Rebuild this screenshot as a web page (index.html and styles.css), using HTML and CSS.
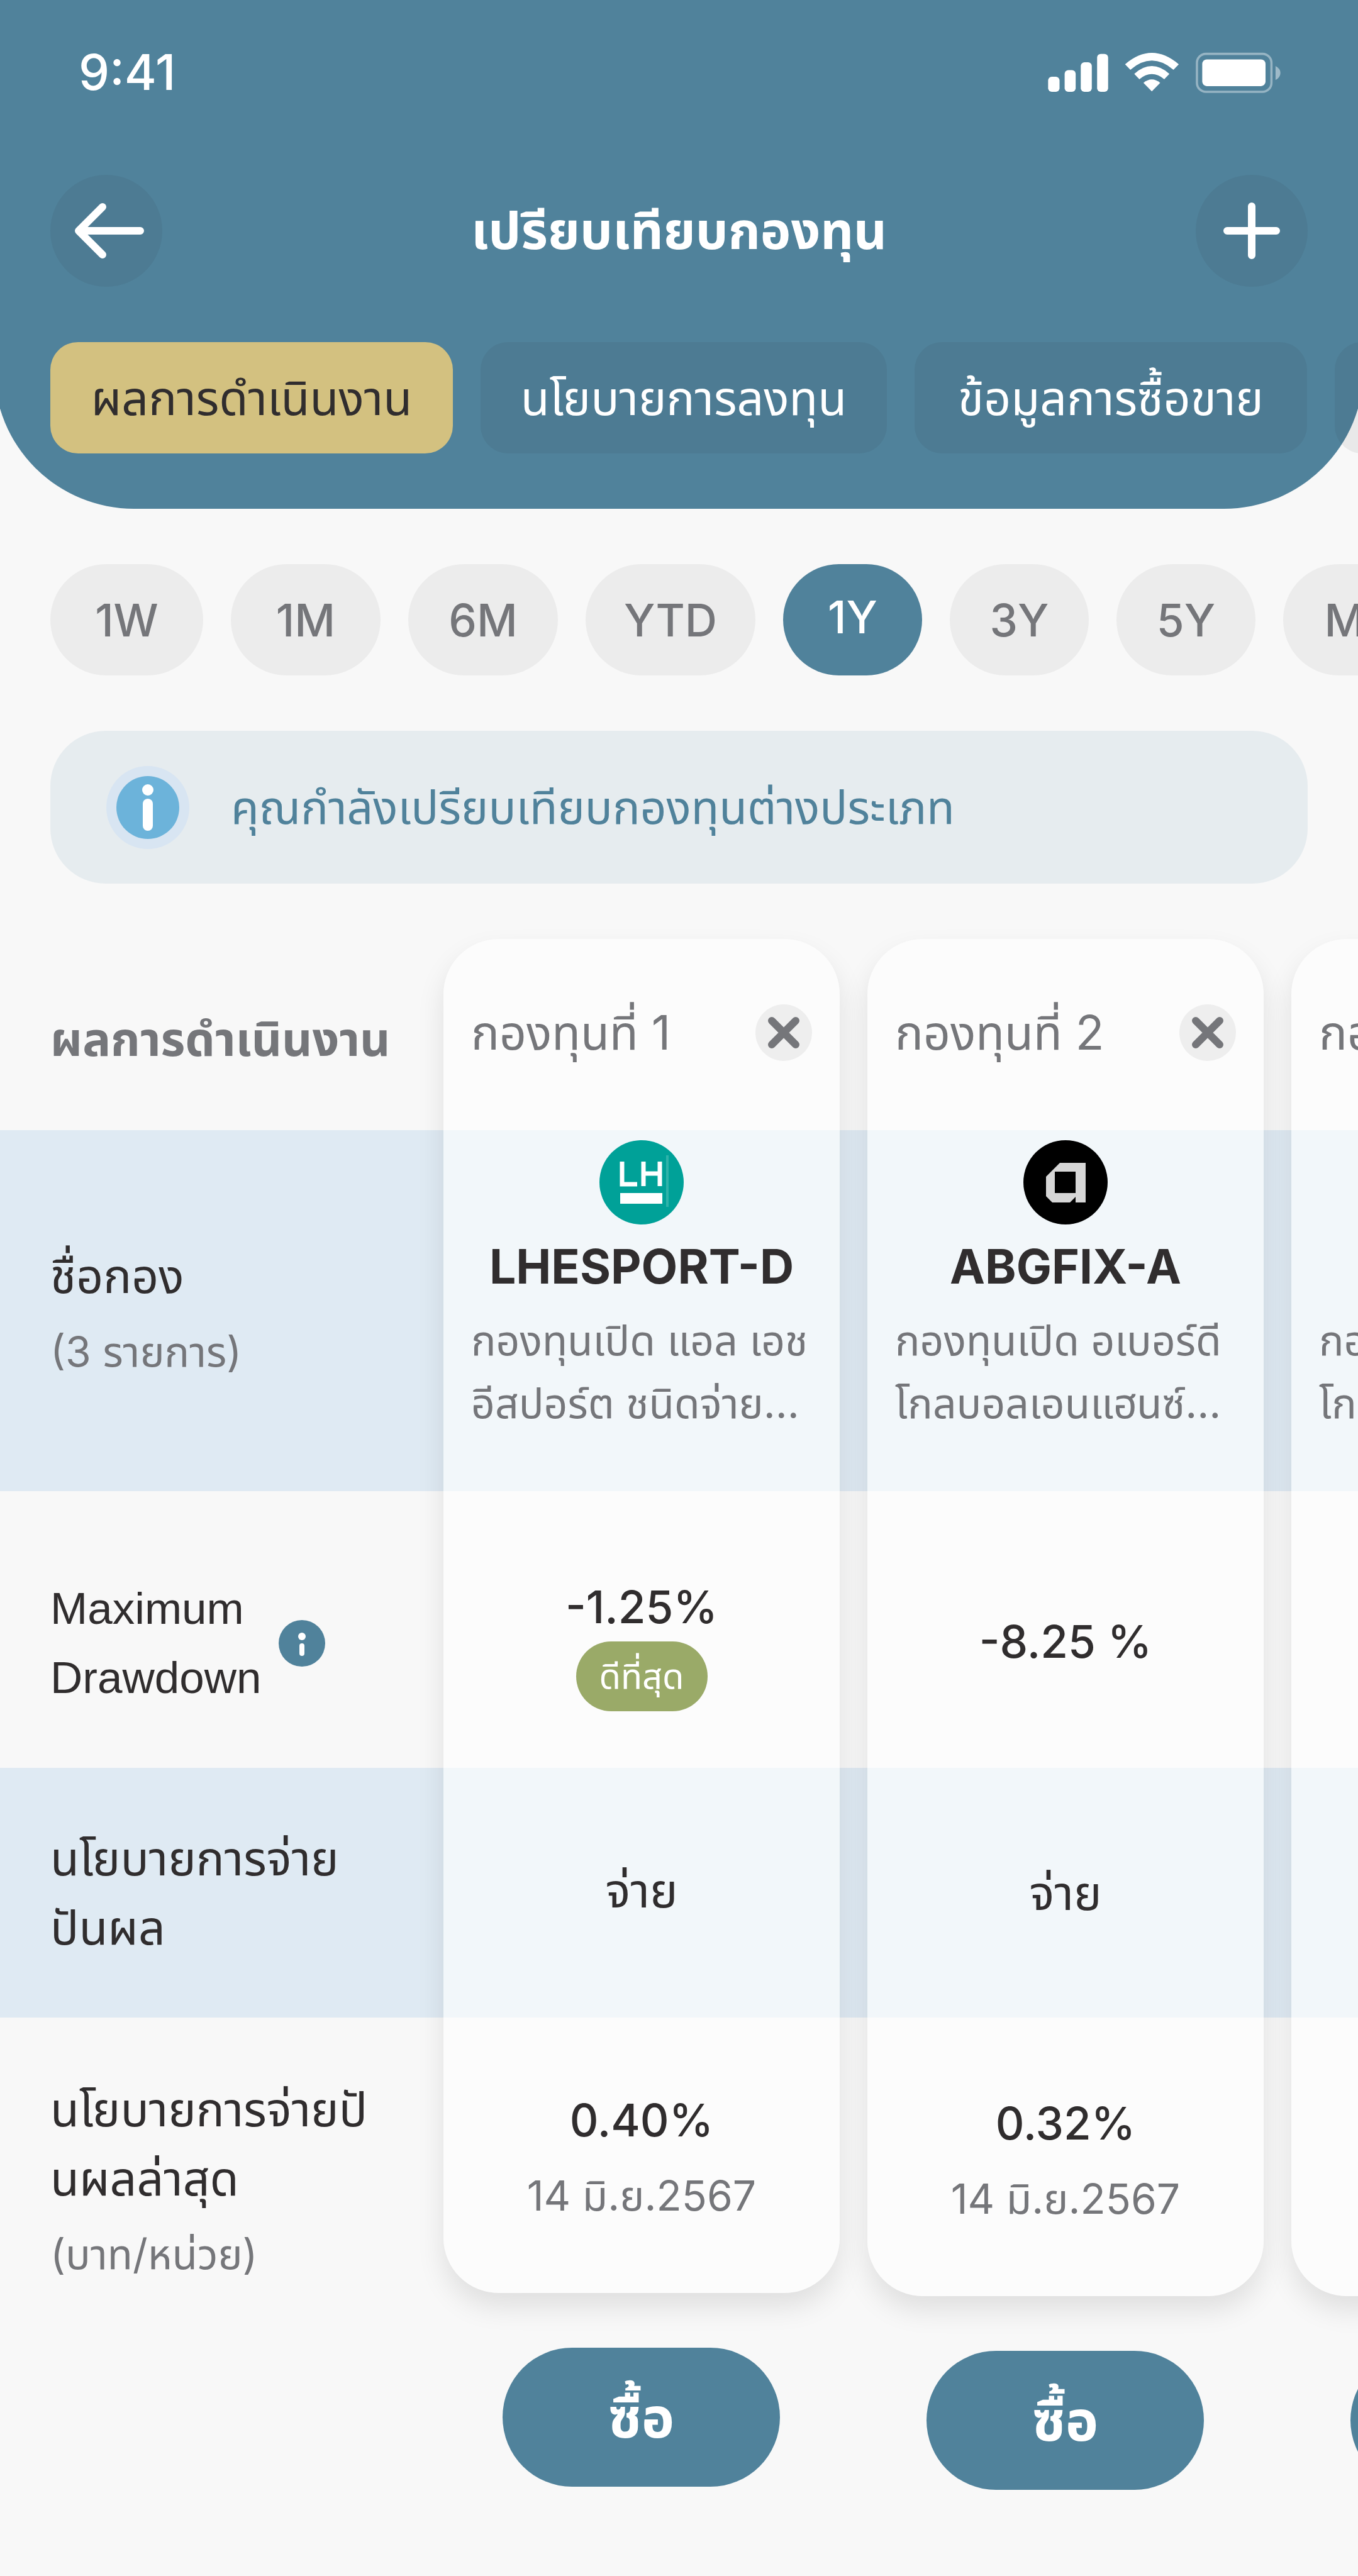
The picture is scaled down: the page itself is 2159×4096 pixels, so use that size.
FILE: index.html
```html
<!DOCTYPE html>
<html lang="th">
<head>
  <meta charset="UTF-8" />
  <meta name="viewport" content="width=device-width, initial-scale=1.0"/>
  <title>เปรียบเทียบกองทุน</title>
  <link rel="stylesheet" href="styles.css">
</head>
<body>
  <header class="header">
    <div class="status-bar">
      <span class="time">9:41</span>
      <svg class="status-icons" viewBox="95 68 1140 200" aria-hidden="true">
        <g fill="#fff">
          <rect x="96" y="188" width="56" height="74" rx="18"/>
          <rect x="177" y="156" width="54" height="106" rx="18"/>
          <rect x="256" y="117" width="54" height="145" rx="18"/>
          <rect x="336" y="76" width="54" height="186" rx="18"/>
          <rect x="851" y="103" width="310" height="131" rx="22"/>
        </g>
        <g fill="#fff">
          <path d="M473 127 Q604 15 736 127 L710 154 Q604 64 499 154 Z"/>
          <path d="M518 174 Q604 98 690 174 L665 200 Q604 150 543 200 Z"/>
          <path d="M563 218 Q604 184 645 218 L604 260 Z"/>
        </g>
        <rect x="825" y="76" width="365" height="186" rx="44" fill="none" stroke="#fff" stroke-width="11" opacity=".4"/>
        <path d="M1210 136 Q1234 148 1234 169 Q1234 192 1210 204 Z" fill="#fff" opacity=".45"/>
      </svg>
    </div>

    <div class="nav-bar">
      <button class="round-btn" aria-label="ย้อนกลับ">
        <svg viewBox="0 0 178 178"><path d="M45 89 H143 M83 51 L45 89 L83 127"/></svg>
      </button>
      <h1>เปรียบเทียบกองทุน</h1>
      <button class="round-btn" aria-label="เพิ่มกองทุน">
        <svg viewBox="0 0 178 178"><path d="M50 89 H128 M89 50 V128"/></svg>
      </button>
    </div>

    <nav class="tabs">
      <button class="tab tab-performance active">ผลการดำเนินงาน</button>
      <button class="tab tab-policy">นโยบายการลงทุน</button>
      <button class="tab tab-trading">ข้อมูลการซื้อขาย</button>
      <button class="tab tab-more" aria-label="เพิ่มเติม"></button>
    </nav>
  </header>

  <main>
    <div class="periods">
      <button class="period wide">1W</button>
      <button class="period">1M</button>
      <button class="period">6M</button>
      <button class="period ytd">YTD</button>
      <button class="period year active">1Y</button>
      <button class="period year">3Y</button>
      <button class="period year">5Y</button>
      <button class="period max">MAX</button>
    </div>

    <div class="notice">
      <svg class="notice-icon" viewBox="0 0 132 132" aria-hidden="true">
        <circle cx="66" cy="66" r="66" fill="#d8e5f2"/>
        <circle cx="66" cy="66" r="50" fill="#6cb3da"/>
        <circle cx="66" cy="38" r="9" fill="#fff"/>
        <rect x="58" y="52" width="16" height="51" rx="8" fill="#fff"/>
      </svg>
      <p>คุณกำลังเปรียบเทียบกองทุนต่างประเภท</p>
    </div>

    <div class="compare">
      <table class="funds">
        <thead>
          <tr class="row-head">
            <th class="label title" scope="col">ผลการดำเนินงาน</th>
            <th class="fund first" scope="col">
              <span class="card"></span>
              <div class="fund-head">
                <span>กองทุนที่ 1</span>
                <button class="close" aria-label="ลบกองทุนที่ 1"><svg viewBox="0 0 90 90"><path d="M26 26 L64 64 M64 26 L26 64"/></svg></button>
              </div>
            </th>
            <th class="fund" scope="col">
              <span class="card"></span>
              <div class="fund-head">
                <span>กองทุนที่ 2</span>
                <button class="close" aria-label="ลบกองทุนที่ 2"><svg viewBox="0 0 90 90"><path d="M26 26 L64 64 M64 26 L26 64"/></svg></button>
              </div>
            </th>
            <th class="fund" scope="col">
              <span class="card"></span>
              <div class="fund-head">
                <span>กองทุนที่ 3</span>
                <button class="close" aria-label="ลบกองทุนที่ 3"><svg viewBox="0 0 90 90"><path d="M26 26 L64 64 M64 26 L26 64"/></svg></button>
              </div>
            </th>
          </tr>
        </thead>
        <tbody>
          <tr class="row-name band">
            <th class="label" scope="row">ชื่อกอง<small>(3 รายการ)</small></th>
            <td>
              <svg class="logo" viewBox="0 0 134 134" aria-hidden="true">
                <circle cx="67" cy="67" r="67" fill="#00a198"/>
                <path d="M36 34 V70 H60 M70 34 V73 M96 34 V73 M70 53 H96" fill="none" stroke="#fff" stroke-width="7"/>
                <rect x="33" y="84" width="67" height="17" fill="#fff"/>
                <path d="M108 24 V106" stroke="#2fb3aa" stroke-width="4"/>
              </svg>
              <strong>LHESPORT-D</strong>
              <p>กองทุนเปิด แอล เอช<br>อีสปอร์ต ชนิดจ่าย...</p>
            </td>
            <td>
              <svg class="logo" viewBox="0 0 134 134" aria-hidden="true">
                <circle cx="67" cy="67" r="67" fill="#000"/>
                <path d="M58 36 H99 V99 H83 V90 L74 99 H46 L36 89 V58 Z M50 50 V84 H83 V50 Z" fill="#d6d6d6" fill-rule="evenodd"/>
              </svg>
              <strong>ABGFIX-A</strong>
              <p>กองทุนเปิด อเบอร์ดี<br>โกลบอลเอนแฮนซ์...</p>
            </td>
            <td class="unnamed">
              <p>กองทุนเปิด อเบอร์ดี<br>โกลบอลเอนแฮนซ์...</p>
            </td>
          </tr>
          <tr class="row-drawdown">
            <th class="label" scope="row">
              <div class="with-info">
                <span>Maximum<br>Drawdown</span>
                <svg class="info" viewBox="0 0 74 74" aria-hidden="true">
                  <circle cx="37" cy="37" r="37" fill="#50829b"/>
                  <circle cx="37" cy="26" r="6" fill="#fff"/>
                  <rect x="33" y="37" width="8" height="20" rx="4" fill="#fff"/>
                </svg>
              </div>
            </th>
            <td><span class="value">-1.25%</span><span class="badge">ดีที่สุด</span></td>
            <td><span class="value">-8.25 %</span></td>
            <td></td>
          </tr>
          <tr class="row-dividend band">
            <th class="label" scope="row">นโยบายการจ่าย<br>ปันผล</th>
            <td>จ่าย</td>
            <td>จ่าย</td>
            <td></td>
          </tr>
          <tr class="row-latest">
            <th class="label" scope="row">นโยบายการจ่ายปั<br>นผลล่าสุด<small>(บาท/หน่วย)</small></th>
            <td><span class="value">0.40%</span><small>14 มิ.ย.2567</small></td>
            <td><span class="value">0.32%</span><small>14 มิ.ย.2567</small></td>
            <td></td>
          </tr>
        </tbody>
      </table>
      <div class="actions">
        <button class="buy">ซื้อ</button>
        <button class="buy">ซื้อ</button>
        <button class="buy">ซื้อ</button>
      </div>
    </div>
  </main>
</body>
</html>
```

FILE: styles.css
```css
* {
  box-sizing: border-box;
}

body {
  margin: 0;
  overflow-x: hidden;
  font-family: Inter, "Noto Sans Thai", sans-serif;
  font-size: 75px;
  line-height: 110px;
  color: #302d2e;
  background: #f8f8f8;
}

button {
  flex: none;
  padding: 0;
  border: none;
  font: inherit;
  color: inherit;
  cursor: pointer;
}

h1,
p {
  margin: 0;
}

svg {
  display: block;
}

/* Header */
.header {
  margin: 0 -9px;
  padding: 60px 89px 88px;
  border-radius: 0 0 222px 222px;
  background: #50829b;
  color: #fff;
}

.status-bar {
  display: flex;
  justify-content: space-between;
  align-items: center;
  height: 110px;
  padding: 0 43px 0 45px;
}

.time {
  font-size: 78px;
  font-weight: 500;
}

.status-icons {
  width: 370px;
  height: 65px;
}

.nav-bar {
  display: flex;
  justify-content: space-between;
  align-items: center;
  margin-top: 108px;
}

.nav-bar h1 {
  font-size: 82px;
  font-weight: 700;
}

.round-btn {
  width: 178px;
  height: 178px;
  border-radius: 50%;
  background: rgba(48, 40, 40, 0.07);
}

.round-btn path {
  fill: none;
  stroke: #fff;
  stroke-width: 12;
  stroke-linecap: round;
  stroke-linejoin: round;
}

.tabs {
  display: flex;
  gap: 44px;
  margin-top: 88px;
}

.tab {
  height: 177px;
  border-radius: 44px;
  background: rgba(48, 40, 40, 0.07);
}

.tab.active {
  background: #d3c180;
  color: #302d2e;
}

.tab-performance {
  width: 640px;
}

.tab-policy {
  width: 646px;
}

.tab-trading,
.tab-more {
  width: 624px;
}

/* Period pills */
.periods {
  display: flex;
  gap: 44px;
  overflow: hidden;
  padding: 88px 80px;
}

.period {
  width: 238px;
  height: 177px;
  border-radius: 89px;
  font-size: 71px;
  font-weight: 500;
  background: #ececec;
  color: #75767a;
}

.period.wide {
  width: 243px;
}

.period.ytd {
  width: 270px;
}

.period.year {
  width: 221px;
}

.period.max {
  width: 296px;
}

.period.active {
  padding-bottom: 10px;
  background: #50829b;
  color: #fff;
}

.notice {
  display: flex;
  align-items: center;
  gap: 66px;
  height: 243px;
  margin: 0 80px 88px;
  padding: 0 89px;
  border-radius: 88px;
  font-size: 73px;
  background: #e6ecef;
  color: #50829b;
}

.notice-icon {
  width: 132px;
}

/* Comparison table */
.compare {
  overflow: hidden;
  margin-top: -88px;
  padding: 88px 0 136px;
}

.funds {
  position: relative;
  width: 2727px;
  table-layout: fixed;
  border-collapse: collapse;
}

.funds th,
.funds td {
  padding: 0;
  font-weight: 400;
}

.funds td {
  position: relative;
  z-index: 1;
  padding: 0 88px 0 44px;
  text-align: center;
}

.funds .label {
  width: 705px;
  padding-left: 80px;
  text-align: left;
}

.funds .title {
  padding-top: 14px;
  font-weight: 700;
  color: #75767a;
}

.card {
  position: absolute;
  top: 0;
  bottom: 0;
  width: 630px;
  border-radius: 88px;
  background: rgba(255, 255, 255, 0.6);
  box-shadow: 0 22px 44px rgba(0, 0, 0, 0.1);
}

.first .card {
  bottom: 5px;
}

.fund {
  vertical-align: top;
  text-align: left;
}

.fund-head {
  position: relative;
  display: flex;
  justify-content: space-between;
  align-items: center;
  margin-right: 44px;
  padding: 94px 44px 0;
  color: #75767a;
}

.close {
  width: 90px;
  height: 90px;
  border-radius: 50%;
  background: #eee;
}

.close path {
  stroke: #75767a;
  stroke-width: 12;
  stroke-linecap: round;
}

.band {
  background: #dfeaf3;
}

.row-head {
  height: 304px;
}

.row-name {
  height: 574px;
}

.row-drawdown {
  height: 440px;
}

.row-dividend {
  height: 397px;
}

.row-latest {
  height: 443px;
}

small {
  display: block;
  margin-top: 10px;
  font-size: 66px;
  color: #75767a;
}

.value {
  display: block;
  font-size: 71px;
  font-weight: 500;
}

.row-name .label {
  padding-top: 10px;
}

.row-name td {
  padding-top: 16px;
  vertical-align: top;
}

.row-name p {
  font-size: 66px;
  line-height: 100px;
  text-align: left;
  white-space: nowrap;
  color: #75767a;
}

.row-name strong {
  display: block;
  margin: 12px -20px;
  font-weight: 700;
}

.row-name .unnamed {
  padding-top: 284px;
}

.row-drawdown td {
  padding-top: 38px;
}

.row-drawdown .label {
  padding-top: 44px;
}

.row-dividend td:nth-child(2) {
  padding-bottom: 8px;
}

.row-latest td {
  padding-top: 12px;
}

.row-latest td:nth-child(2) {
  padding-top: 2px;
}

.row-latest .label {
  padding-top: 78px;
}

.logo {
  width: 134px;
  margin: 0 auto;
}

.with-info {
  display: flex;
  align-items: center;
  gap: 28px;
  font-family: "Liberation Sans", sans-serif;
  font-size: 71px;
}

.info {
  width: 74px;
}

.badge {
  display: block;
  width: 209px;
  height: 111px;
  margin: 0 auto;
  border-radius: 56px;
  font-size: 56px;
  background: #9aaa68;
  color: #fff;
}

.actions {
  display: flex;
  gap: 233px;
  padding: 82px 0 0 799px;
}

.buy {
  width: 441px;
  height: 221px;
  border-radius: 111px;
  font-size: 88px;
  font-weight: 700;
  background: #50829b;
  color: #fff;
}

.buy + .buy {
  margin-top: 5px;
}
```
